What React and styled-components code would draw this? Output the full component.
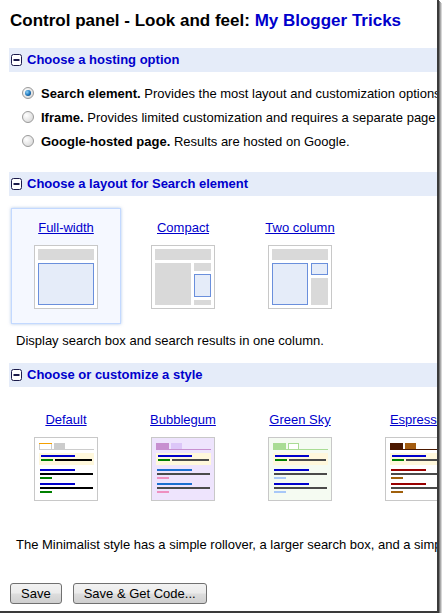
import styled, { createGlobalStyle } from "styled-components";

const GlobalStyle = createGlobalStyle`
  body {
    margin: 0;
    background: #fff;
    font-family: "Liberation Sans", Arial, sans-serif;
    font-size: 13px;
    color: #000;
  }
`;

const hostingOptions = [
  { title: "Search element.", text: "Provides the most layout and customization options", checked: true },
  { title: "Iframe.", text: "Provides limited customization and requires a separate page" },
  { title: "Google-hosted page.", text: "Results are hosted on Google." },
];

const layouts = [
  { name: "Full-width", kind: "full", selected: true },
  { name: "Compact", kind: "compact" },
  { name: "Two column", kind: "two" },
];

const themes = [
  {
    name: "Default",
    bg: "#ffffff",
    tab1: "#ffffff",
    tab1Stroke: "#cccccc",
    tab1Top: "#f5a000",
    tab2: "#cccccc",
    rule: "#cccccc",
    resTitle: "#0000cc",
    resText: "#000000",
    resUrl: "#008000",
    adText: "#000000",
  },
  {
    name: "Bubblegum",
    bg: "#eee4fd",
    tab1: "#c78fd0",
    tab2: "#dcc6f8",
    rule: "#c78fd0",
    resTitle: "#1a6ed0",
    resText: "#4a4a4a",
    resUrl: "#ee90c0",
    adText: "#4a4a4a",
  },
  {
    name: "Green Sky",
    bg: "#f5fbf2",
    tab1: "#a9dc94",
    tab2: "#ffffff",
    tab2Stroke: "#a9dc94",
    rule: "#a9dc94",
    resTitle: "#0000cc",
    resText: "#4a4a4a",
    resUrl: "#a8c8f8",
    adText: "#4a4a4a",
  },
  {
    name: "Espresso",
    bg: "#ffffff",
    tab1: "#4b1800",
    tab2: "#a35c10",
    rule: "#4b1800",
    resTitle: "#990000",
    resText: "#4a4a4a",
    resUrl: "#a0600c",
    adText: "#4a4a4a",
  },
];

const Window = styled.div`
  box-sizing: border-box;
  width: 439px;
  height: 613px;
  overflow: hidden;
  background: #fff;
  border-right: 2px solid #3a3a3a;
  border-bottom: 2px solid #3a3a3a;
  box-shadow: 1px 1px 0 #777, 2px 2px 0 #aaa, 3px 3px 0 #d6d6d6;
  padding-left: 9px;
`;

const Inner = styled.div`
  width: 440px;
`;

const Title = styled.h1`
  margin: 0;
  padding: 11px 0 0 1px;
  font-size: 17px;
  line-height: 20px;
  font-weight: bold;
  white-space: nowrap;
`;

const Blog = styled.span`
  color: #0000cc;
`;

const SectionBar = styled.div`
  display: flex;
  align-items: center;
  gap: 5px;
  height: 24px;
  margin-top: ${(p) => p.$top}px;
  padding-left: 2px;
  background: #e5ecf9;
  color: #0000cc;
  font-weight: bold;
  font-size: 13px;
  line-height: 24px;
  white-space: nowrap;
`;

const OptionList = styled.div`
  margin-top: 9px;
  padding-left: 13px;
`;

const OptionRow = styled.label`
  display: flex;
  align-items: center;
  gap: 7px;
  height: 24px;
  white-space: nowrap;
`;

const Cards = styled.div`
  display: grid;
  grid-template-columns: repeat(4, 110px);
  column-gap: 7px;
  margin-left: 2px;
  margin-top: ${(p) => p.$top}px;
`;

const Card = styled.div`
  display: flex;
  flex-direction: column;
  align-items: center;
  height: ${(p) => p.$height}px;
  box-sizing: border-box;
  padding-top: 11px;
  border: 1px solid ${(p) => (p.$selected ? "#c3d9ff" : "transparent")};
  background: ${(p) => (p.$selected ? "#f5f8ff" : "transparent")};
  box-shadow: ${(p) => (p.$selected ? "0 0 3px rgba(110, 150, 210, 0.55)" : "none")};
`;

const CardLink = styled.a`
  color: #0000cc;
  text-decoration: underline;
  line-height: 16px;
  white-space: nowrap;
  margin-bottom: 9px;
  cursor: pointer;
`;

const Note = styled.p`
  margin: ${(p) => p.$top}px 0 0 7px;
  line-height: 16px;
  white-space: nowrap;
`;

const Buttons = styled.div`
  display: flex;
  gap: 11px;
  margin-top: 30px;
  margin-left: 1px;
`;

const Button = styled.button`
  height: 21px;
  padding: 0 10px;
  border: 1px solid #707070;
  border-radius: 3px;
  background: linear-gradient(#f2f2f2, #ebebeb 48%, #dddddd 52%, #cfcfcf);
  font-family: "Liberation Sans", Arial, sans-serif;
  font-size: 13px;
  color: #000;
  line-height: 19px;
`;

const MinusIcon = () => (
  <svg width="11" height="12" viewBox="0 0 11 12">
    <rect x="0.5" y="0.5" width="10" height="11" rx="2" fill="#fff" stroke="#1a1a4a" />
    <rect x="2.5" y="5" width="6" height="2" fill="#1a1a4a" />
  </svg>
);

const Radio = ({ checked }) => (
  <svg width="12" height="12" viewBox="0 0 12 12">
    <defs>
      <radialGradient id="rbg" cx="0.35" cy="0.35" r="0.8">
        <stop offset="0" stopColor="#ffffff" />
        <stop offset="1" stopColor="#d4d4d4" />
      </radialGradient>
      <radialGradient id="rdot" cx="0.35" cy="0.35" r="0.8">
        <stop offset="0" stopColor="#8fd0f5" />
        <stop offset="0.6" stopColor="#1e78be" />
        <stop offset="1" stopColor="#0b3f74" />
      </radialGradient>
    </defs>
    <circle cx="6" cy="6" r="5.5" fill="url(#rbg)" stroke="#9a9a9a" />
    {checked && <circle cx="6" cy="6" r="3" fill="url(#rdot)" />}
  </svg>
);

const gray = "#d9d9d9";
const paleBlue = "#e5ecf9";
const edgeBlue = "#6a8fdc";

const BlueBox = ({ x, y, w, h }) => (
  <rect x={x + 0.5} y={y + 0.5} width={w - 1} height={h - 1} fill={paleBlue} stroke={edgeBlue} />
);

const LayoutThumb = ({ kind }) => (
  <svg width="64" height="64" viewBox="0 0 64 64">
    <rect x="0.5" y="0.5" width="63" height="63" fill="#fff" stroke="#c8c8c8" />
    <rect x="4" y="4" width="56" height="11" fill={gray} />
    {kind === "full" && <BlueBox x={4} y={18} w={56} h={42} />}
    {kind === "compact" && (
      <>
        <rect x="4" y="18" width="36" height="42" fill={gray} />
        <rect x="43" y="18" width="17" height="8" fill={gray} />
        <BlueBox x={43} y={29} w={17} h={23} />
        <rect x="43" y="55" width="17" height="5" fill={gray} />
      </>
    )}
    {kind === "two" && (
      <>
        <BlueBox x={4} y={18} w={36} h={42} />
        <BlueBox x={43} y={18} w={17} h={12} />
        <rect x="43" y="33" width="17" height="27" fill={gray} />
      </>
    )}
  </svg>
);

const StyleThumb = ({ t }) => (
  <svg width="64" height="64" viewBox="0 0 64 64">
    <rect x="0.5" y="0.5" width="63" height="63" fill={t.bg} stroke="#c8c8c8" />
    <rect x="5" y="6" width="13" height="6" fill={t.tab1} />
    {t.tab1Stroke && (
      <>
        <rect x="5" y="6" width="1" height="6" fill={t.tab1Stroke} />
        <rect x="17" y="6" width="1" height="6" fill={t.tab1Stroke} />
        <rect x="5" y="6" width="13" height="1" fill={t.tab1Top} />
      </>
    )}
    <rect x="20" y="6" width="11" height="6" fill={t.tab2} />
    {t.tab2Stroke && (
      <rect x="20.5" y="6.5" width="10" height="6" fill="none" stroke={t.tab2Stroke} />
    )}
    <rect x="5" y="12" width="55" height="1" fill={t.rule} />
    <rect x="5" y="16" width="55" height="12" fill="#fff8dc" />
    <rect x="7" y="18" width="34" height="2" fill="#0000cc" />
    <rect x="7" y="22" width="12" height="2" fill="#008000" />
    <rect x="21" y="22" width="37" height="2" fill={t.adText} />
    {[32, 46].map((y) => (
      <g key={y}>
        <rect x="6" y={y} width="35" height="2" fill={t.resTitle} />
        <rect x="6" y={y + 4} width="53" height="2" fill={t.resText} />
        <rect x="6" y={y + 8} width="12" height="2" fill={t.resUrl} />
      </g>
    ))}
  </svg>
);

export default function App() {
  return (
    <>
      <GlobalStyle />
      <Window>
        <Inner>
          <Title>
            Control panel - Look and feel: <Blog>My Blogger Tricks</Blog>
          </Title>

          <SectionBar $top={17}>
            <MinusIcon />
            Choose a hosting option
          </SectionBar>
          <OptionList>
            {hostingOptions.map((o) => (
              <OptionRow key={o.title}>
                <Radio checked={o.checked} />
                <span>
                  <b>{o.title}</b> {o.text}
                </span>
              </OptionRow>
            ))}
          </OptionList>

          <SectionBar $top={19}>
            <MinusIcon />
            Choose a layout for Search element
          </SectionBar>
          <Cards $top={12}>
            {layouts.map((l) => (
              <Card key={l.name} $height={116} $selected={l.selected}>
                <CardLink>{l.name}</CardLink>
                <LayoutThumb kind={l.kind} />
              </Card>
            ))}
          </Cards>
          <Note $top={9}>Display search box and search results in one column.</Note>

          <SectionBar $top={14}>
            <MinusIcon />
            Choose or customize a style
          </SectionBar>
          <Cards $top={13}>
            {themes.map((t) => (
              <Card key={t.name} $height={113}>
                <CardLink>{t.name}</CardLink>
                <StyleThumb t={t} />
              </Card>
            ))}
          </Cards>
          <Note $top={24}>
            The Minimalist style has a simple rollover, a larger search box, and a simple
            look.
          </Note>

          <Buttons>
            <Button>Save</Button>
            <Button>Save &amp; Get Code...</Button>
          </Buttons>
        </Inner>
      </Window>
    </>
  );
}
